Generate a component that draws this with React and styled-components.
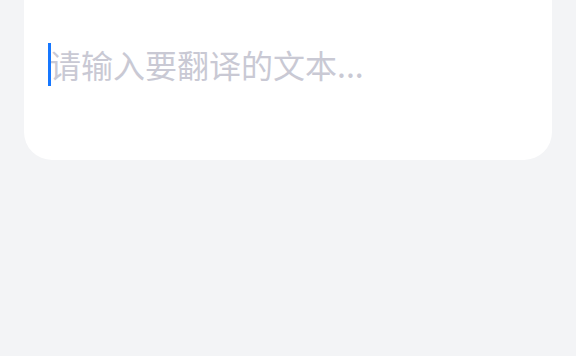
import styled, { createGlobalStyle } from 'styled-components';

const GlobalStyle = createGlobalStyle`
  html, body {
    margin: 0;
    padding: 0;
    background: #f3f4f6;
    font-family: "Noto Sans CJK SC", "Noto Sans", sans-serif;
  }
`;

const Page = styled.div`
  min-height: 356px;
  padding: 0 24px;
  box-sizing: border-box;
  overflow: hidden;
`;

const Card = styled.div`
  margin-top: -40px;
  background: #ffffff;
  border-radius: 28px;
  padding: 83px 24px 74px;
`;

const InputRow = styled.div`
  display: flex;
  align-items: center;
  height: 43px;
`;

const Caret = styled.span`
  display: block;
  width: 3px;
  height: 43px;
  background: #1677ff;
  flex-shrink: 0;
  position: relative;
  z-index: 1;
`;

const Placeholder = styled.span`
  margin-left: -2px;
  font-size: 32px;
  line-height: 43px;
  color: #c9c9d4;
  white-space: nowrap;
`;

export default function App() {
  return (
    <Page>
      <GlobalStyle />
      <Card>
        <InputRow>
          <Caret />
          <Placeholder>请输入要翻译的文本...</Placeholder>
        </InputRow>
      </Card>
    </Page>
  );
}
